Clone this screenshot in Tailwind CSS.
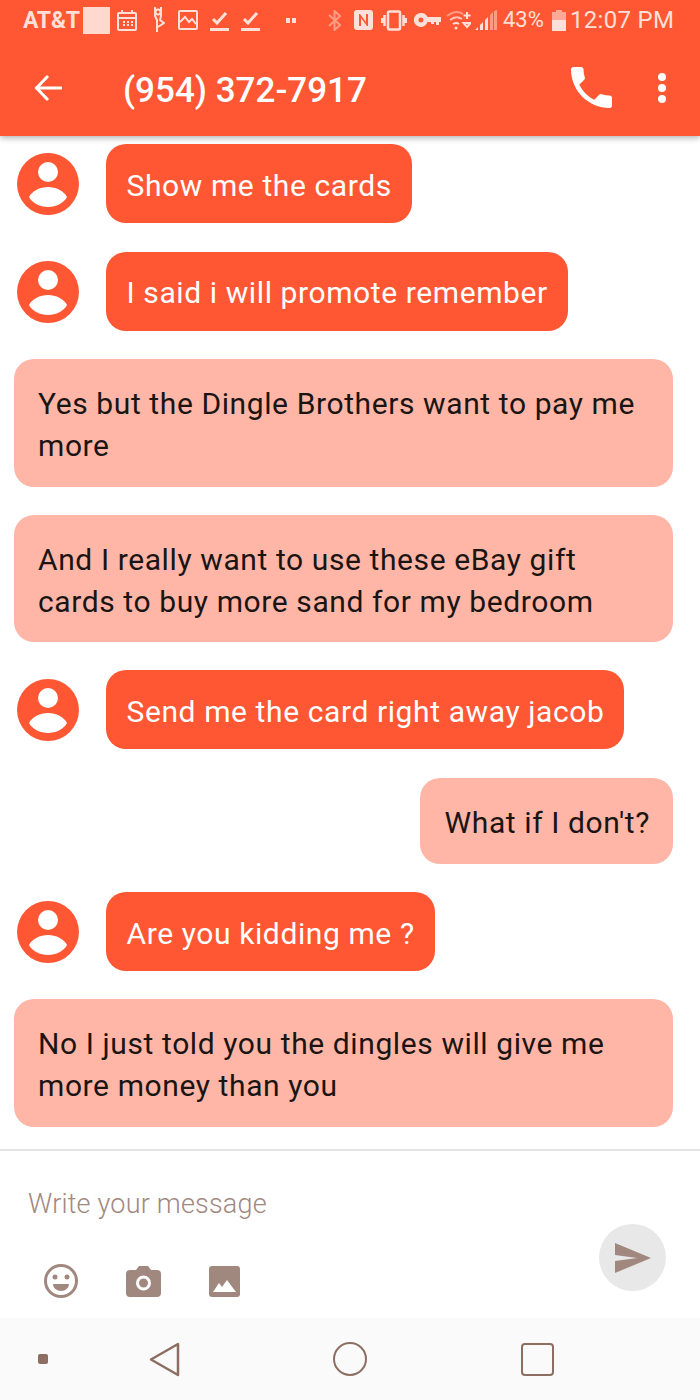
<!DOCTYPE html>
<html lang="en">
<head>
<meta charset="UTF-8">
<title>Messages</title>
<script src="https://cdn.jsdelivr.net/npm/@tailwindcss/browser@4"></script>
</head>
<body class="w-[700px] h-[1400px] overflow-hidden bg-white font-['Roboto',sans-serif] flex flex-col">

<!-- app bar with status bar -->
<header class="h-[136px] shrink-0 bg-[#ff5733] text-white shadow-[0_2px_6px_rgba(0,0,0,0.3)] relative z-10">
  <div class="h-[40px] flex items-center pl-[23px] text-[#ffe0d8]">
    <span class="w-[60px] text-[23px] font-bold leading-none tracking-[-0.2px]">AT&amp;T</span>
    <div class="w-[27px] h-[27px] bg-[#ffd9cf]"></div>
    <svg class="ml-[7px] w-[20px] h-[21px]" viewBox="0 0 20 21" fill="none" stroke="currentColor" stroke-width="2"><rect x="1" y="3" width="18" height="17" rx="1"/><path d="M5 0v4M15 0v4M1 8h18M6 12h2M10 12h2M14 12h2M6 15h2M10 15h2M14 15h2"/></svg>
    <svg class="ml-[14px] w-[14px] h-[26px]" viewBox="0 0 14 26" fill="none" stroke="currentColor" stroke-width="2"><circle cx="7" cy="5" r="2.500"/><path d="M4 0v9l2 4v12M10 0v9l-1 4 4 3-6 4"/></svg>
    <svg class="ml-[13px] w-[20px] h-[20px]" viewBox="0 0 20 20" fill="none" stroke="currentColor" stroke-width="2"><rect x="1" y="1" width="18" height="18" rx="1"/><path d="M2 12l5-5 4 5 3-3 4 5"/></svg>
    <svg class="ml-[12px] w-[19px] h-[21px]" viewBox="0 0 19 21" fill="none" stroke="currentColor" stroke-width="3"><path d="M3 9l4 4 9-10M0 19.500h19"/></svg>
    <svg class="ml-[12px] w-[19px] h-[21px]" viewBox="0 0 19 21" fill="none" stroke="currentColor" stroke-width="3"><path d="M3 9l4 4 9-10M0 19.500h19"/></svg>
    <svg class="ml-[26px] w-[10px] h-[5px]" viewBox="0 0 10 5" fill="currentColor"><rect width="4" height="5"/><rect x="6" width="4" height="5"/></svg>
    <svg class="ml-[32px] w-[13px] h-[21px] opacity-50" viewBox="0 0 13 21" fill="none" stroke="currentColor" stroke-width="2"><path d="M1 5l11 10-5.500 5V1L12 6 1 16"/></svg>
    <svg class="ml-[13px] w-[19px] h-[20px]" viewBox="0 0 19 20" fill="currentColor"><path fill-rule="evenodd" d="M3 0h13a3 3 0 0 1 3 3v14a3 3 0 0 1-3 3H3a3 3 0 0 1-3-3V3a3 3 0 0 1 3-3zm2 4v12h2V8l6 8h1V4h-2v8L6 4z"/></svg>
    <svg class="ml-[8px] w-[26px] h-[21px]" viewBox="0 0 26 21" fill="none" stroke="currentColor" stroke-width="2.500"><rect x="7" y="1.500" width="12" height="18" rx="1.500"/><path d="M3.500 5v11M1 8v5M22.500 5v11M25 8v5"/></svg>
    <svg class="ml-[7px] w-[27px] h-[14px]" viewBox="0 0 27 14" fill="currentColor"><path d="M7 0a7 7 0 0 1 6.500 4H27v5h-2v3h-3V9h-2v2h-3V9h-3.500A7 7 0 1 1 7 0zm0 4.500a2.500 2.500 0 1 0 0 5 2.500 2.500 0 0 0 0-5z"/></svg>
    <svg class="ml-[5px] w-[25px] h-[20px]" viewBox="0 0 25 20" fill="none" stroke="currentColor" stroke-width="2"><path d="M1 6q9-7 16-2" opacity=".5"/><path d="M4 10q6-5 12-1" opacity=".8"/><path d="M7 14q3-2 6 0"/><circle cx="10" cy="18" r="1.500" fill="currentColor" stroke="none"/><path d="M21 2v7M17.500 5.500h7M17.500 13h7l-3.500 4z"/></svg>
    <svg class="ml-[4px] w-[22px] h-[20px]" viewBox="0 0 22 20" fill="currentColor"><path d="M0 20l3-3v3zM5 20v-5l3-3v8zM10 20V10l3-3v13z"/><path opacity=".5" d="M15 20V5l3-3v18zM19 20V1l3-1v20z"/></svg>
    <span class="ml-[6px] w-[41px] text-[22px] leading-none whitespace-nowrap">43%</span>
    <svg class="ml-[8px] w-[14px] h-[21px]" viewBox="0 0 14 21" fill="currentColor"><path opacity=".6" d="M4 0h6v2h4v8H0V2h4z"/><rect y="10" width="14" height="11"/></svg>
    <span class="ml-[4px] text-[24px] leading-none whitespace-nowrap tracking-[0.3px]">12:07 PM</span>
  </div>
  <div class="h-[96px] flex items-center">
    <svg class="ml-[34px] w-[28px] h-[28px]" viewBox="0 0 28 28" fill="none" stroke="currentColor" stroke-width="3"><path d="M28 14H3M14 2L2.500 14 14 26"/></svg>
    <h1 class="ml-[61px] pt-[4px] text-[35px] font-medium leading-none whitespace-nowrap">(954) 372-7917</h1>
    <svg class="ml-auto w-[41px] h-[41px] -mt-[2px]" viewBox="3 3 18 18" fill="currentColor"><path d="M6.620 10.790c1.440 2.830 3.760 5.140 6.590 6.590l2.200-2.200c.27-.27.67-.36 1.020-.24 1.120.37 2.330.57 3.570.57.550 0 1 .45 1 1V20c0 .55-.45 1-1 1-9.390 0-17-7.610-17-17 0-.55.45-1 1-1h3.500c.55 0 1 .45 1 1 0 1.250.2 2.450.57 3.570.11.350.03.740-.25 1.020l-2.200 2.200z"/></svg>
    <div class="ml-[46px] mr-[34px] flex flex-col gap-[3px]">
      <span class="w-[8px] h-[8px] rounded-full bg-white"></span>
      <span class="w-[8px] h-[8px] rounded-full bg-white"></span>
      <span class="w-[8px] h-[8px] rounded-full bg-white"></span>
    </div>
  </div>
</header>

<!-- conversation -->
<main class="h-[1013px] shrink-0 overflow-hidden pt-[8px] flex flex-col gap-[28px] text-[30px] leading-[42px] tracking-[0.6px]">
  <div class="flex items-center pl-[17px]">
    <svg class="w-[62px] h-[62px]" viewBox="0 0 62 62"><circle cx="31" cy="31" r="31" fill="#ff5733"/><circle cx="31" cy="19" r="10" fill="#fff"/><path d="M12 44c3-6 11-10 19-10s16 4 19 10c-3 6-11 10-19 10s-16-4-19-10z" fill="#fff"/></svg>
    <div class="ml-[27px] pl-[20.500px] pr-[20px] pt-[20.500px] pb-[16.500px] rounded-[20px] bg-[#ff5733] text-white">Show me the cards</div>
  </div>
  <div class="flex items-center pl-[17px] mt-px">
    <svg class="w-[62px] h-[62px]" viewBox="0 0 62 62"><circle cx="31" cy="31" r="31" fill="#ff5733"/><circle cx="31" cy="19" r="10" fill="#fff"/><path d="M12 44c3-6 11-10 19-10s16 4 19 10c-3 6-11 10-19 10s-16-4-19-10z" fill="#fff"/></svg>
    <div class="ml-[27px] pl-[20.500px] pr-[20px] pt-[20px] pb-[17px] rounded-[20px] bg-[#ff5733] text-white">I said i will promote remember</div>
  </div>
  <div class="mx-[14px] w-[659px] pl-[24px] pr-[30px] pt-[24px] pb-[20px] rounded-[20px] bg-[#ffb6a7] text-[#1a1512]">Yes but the Dingle Brothers want to pay me more</div>
  <div class="mx-[14px] w-[659px] pl-[24px] pr-[30px] pt-[24px] pb-[19px] rounded-[20px] bg-[#ffb6a7] text-[#1a1512]">And I really want to use these eBay gift cards to buy more sand for my bedroom</div>
  <div class="flex items-center pl-[17px] mb-px">
    <svg class="w-[62px] h-[62px]" viewBox="0 0 62 62"><circle cx="31" cy="31" r="31" fill="#ff5733"/><circle cx="31" cy="19" r="10" fill="#fff"/><path d="M12 44c3-6 11-10 19-10s16 4 19 10c-3 6-11 10-19 10s-16-4-19-10z" fill="#fff"/></svg>
    <div class="ml-[27px] pl-[20.500px] pr-[20px] pt-[20.500px] pb-[16.500px] rounded-[20px] bg-[#ff5733] text-white">Send me the card right away jacob</div>
  </div>
  <div class="self-end mr-[27px] pl-[25px] pr-[23px] pt-[23.500px] pb-[20.500px] rounded-[20px] bg-[#ffb6a7] text-[#1a1512]">What if I don't?</div>
  <div class="flex items-center pl-[17px]">
    <svg class="w-[62px] h-[62px]" viewBox="0 0 62 62"><circle cx="31" cy="31" r="31" fill="#ff5733"/><circle cx="31" cy="19" r="10" fill="#fff"/><path d="M12 44c3-6 11-10 19-10s16 4 19 10c-3 6-11 10-19 10s-16-4-19-10z" fill="#fff"/></svg>
    <div class="ml-[27px] pl-[20.500px] pr-[20px] pt-[20.500px] pb-[16.500px] rounded-[20px] bg-[#ff5733] text-white">Are you kidding me ?</div>
  </div>
  <div class="mx-[14px] w-[659px] pl-[24px] pr-[30px] pt-[24px] pb-[20px] rounded-[20px] bg-[#ffb6a7] text-[#1a1512]">No I just told you the dingles will give me more money than you</div>
</main>

<!-- composer -->
<section class="h-[169px] shrink-0 border-t-2 border-[#e3e3e3] flex justify-between pl-[28px] pr-[34px] text-[#a1887f]">
  <div class="flex flex-col">
    <div class="mt-[37px] text-[27px] leading-[32px] font-light tracking-[0.2px]">Write your message</div>
    <div class="mt-[44px] flex items-center ml-[16px]">
      <svg class="w-[34px] h-[34px]" viewBox="0 0 34 34"><circle cx="17" cy="17" r="15.500" fill="none" stroke="currentColor" stroke-width="3"/><circle cx="11" cy="13" r="2.500" fill="currentColor"/><circle cx="23" cy="13" r="2.500" fill="currentColor"/><path d="M9 20h16a8 7 0 0 1-16 0z" fill="currentColor"/></svg>
      <svg class="ml-[48px] w-[35px] h-[31px]" viewBox="0 0 35 31"><path d="M4 4h6l3-4h9l3 4h6a4 4 0 0 1 4 4v19a4 4 0 0 1-4 4H4a4 4 0 0 1-4-4V8a4 4 0 0 1 4-4z" fill="currentColor"/><circle cx="17.500" cy="17" r="6" fill="none" stroke="#fff" stroke-width="3"/></svg>
      <svg class="ml-[48px] w-[31px] h-[31px]" viewBox="0 0 31 31"><rect width="31" height="31" rx="3" fill="currentColor"/><path d="M4 26l6-9 3 4 5-7 9 12z" fill="#fff"/></svg>
    </div>
  </div>
  <div class="mt-[73px] w-[67px] h-[67px] rounded-full bg-[#e8e8e8] flex items-center justify-center">
    <svg class="w-[36px] h-[30px]" viewBox="0 0 36 30" fill="currentColor"><path d="M0 0l36 15L0 30V18l22-3L0 12z"/></svg>
  </div>
</section>

<!-- nav bar -->
<nav class="h-[82px] shrink-0 bg-[#fafafa] flex items-center text-[#8d6e63]">
  <div class="ml-[38px] w-[10px] h-[10px] rounded-[2px] bg-current"></div>
  <svg class="ml-[101px] w-[31px] h-[35px]" viewBox="0 0 31 35" fill="none" stroke="currentColor" stroke-width="2.500" stroke-linejoin="round"><path d="M29 2v31L2 17.500z"/></svg>
  <div class="ml-[153px] w-[34px] h-[34px] rounded-full border-[2.500px] border-current"></div>
  <div class="ml-[154px] w-[33px] h-[33px] rounded-[4px] border-[2.500px] border-current"></div>
</nav>

</body>
</html>
